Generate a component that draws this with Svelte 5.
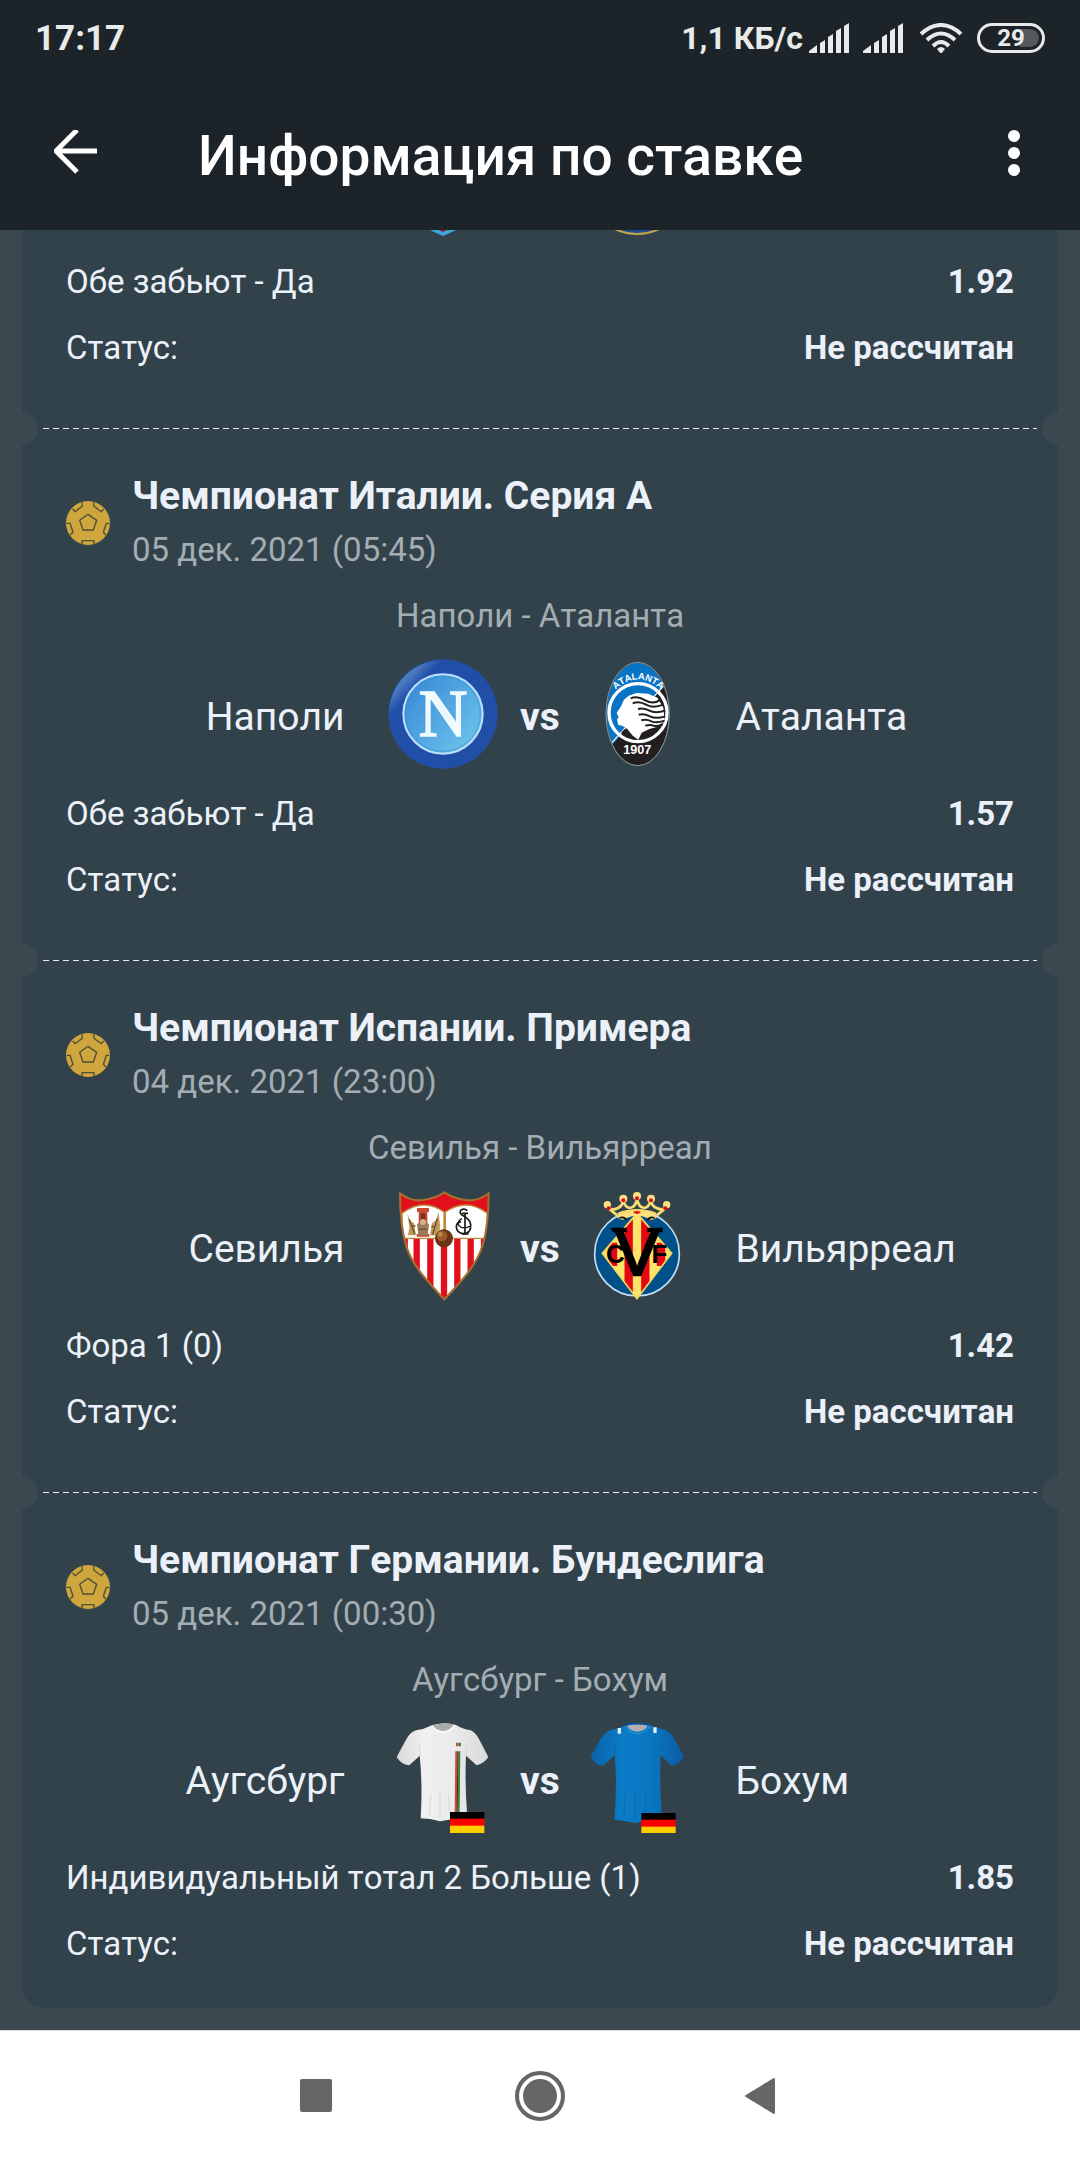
<script>
    let bets = [
        {
            crests: ["arsenal", "boca"],
            market: "Обе забьют - Да",
            odds: "1.92",
            status: "Не рассчитан",
        },
        {
            league: "Чемпионат Италии. Серия А",
            date: "05 дек. 2021 (05:45)",
            home: "Наполи",
            away: "Аталанта",
            crests: ["napoli", "atalanta"],
            market: "Обе забьют - Да",
            odds: "1.57",
            status: "Не рассчитан",
        },
        {
            league: "Чемпионат Испании. Примера",
            date: "04 дек. 2021 (23:00)",
            home: "Севилья",
            away: "Вильярреал",
            crests: ["sevilla", "villarreal"],
            market: "Фора 1 (0)",
            odds: "1.42",
            status: "Не рассчитан",
        },
        {
            league: "Чемпионат Германии. Бундеслига",
            date: "05 дек. 2021 (00:30)",
            home: "Аугсбург",
            away: "Бохум",
            crests: ["augsburg", "bochum"],
            market: "Индивидуальный тотал 2 Больше (1)",
            odds: "1.85",
            status: "Не рассчитан",
        },
    ];
</script>

{#snippet signal()}
    <svg class="signal" viewBox="0 0 40 30" aria-hidden="true">
        <path d="M0 30v-2l8-6v8zM11 30V20l5-3v13zM19 30V14l5-3v19zM27 30V8l5-3v25zM35 30V3l5-3v30z" />
    </svg>
{/snippet}

{#snippet germany(x, y)}
    <rect {x} {y} width="103" height="21" fill="#000" />
    <rect {x} y={y + 20} width="103" height="22" fill="#f00" />
    <rect {x} y={y + 41} width="103" height="22" fill="#ffce00" />
{/snippet}

{#snippet crest(name)}
    {#if name === "arsenal"}
        <svg class="crest" viewBox="0 0 110 110" aria-hidden="true">
            <path d="M15 10h80v58q0 25-40 41Q15 93 15 68z" fill="#3fa3d8" />
            <path d="M20 15h70v52q0 22-35 38Q20 89 20 67z" fill="#7c2740" />
        </svg>
    {:else if name === "boca"}
        <svg class="crest" viewBox="0 0 110 110" aria-hidden="true">
            <circle cx="54" cy="57" r="50" fill="#1c4a94" stroke="#c0a54a" stroke-width="2" />
        </svg>
    {:else if name === "napoli"}
        <svg class="crest" viewBox="54 54 330 330" aria-hidden="true">
            <defs>
                <linearGradient id="shine" x1="0.1" y1="0.15" x2="0.4" y2="0.4">
                    <stop offset="0" stop-color="#5d8fce" />
                    <stop offset="0.5" stop-color="#4b79c0" />
                    <stop offset="1" stop-color="#214fa8" />
                </linearGradient>
                <linearGradient id="sky" x1="0.1" y1="0.2" x2="0.9" y2="0.9">
                    <stop offset="0" stop-color="#3c8fd9" />
                    <stop offset="1" stop-color="#6cc3ea" />
                </linearGradient>
                <linearGradient id="letter" x1="0" y1="0" x2="1" y2="1">
                    <stop offset="0" stop-color="#fff" />
                    <stop offset="0.5" stop-color="#e6f6fc" />
                    <stop offset="1" stop-color="#fff" />
                </linearGradient>
            </defs>
            <circle cx="219" cy="219" r="164" fill="#214fa8" />
            <path d="M219 58A161 161 0 0 0 60 250Q150 120 275 68Q245 58 219 58z" fill="url(#shine)" />
            <circle cx="219" cy="219" r="119" fill="url(#sky)" stroke="#bfe0fa" stroke-width="6" />
            <circle cx="219" cy="219" r="112" fill="none" stroke="#3d8fcf" stroke-width="2" />
            <text class="serif" x="219" y="285" font-size="202" fill="url(#letter)" stroke="#f2fbff" stroke-width="5" text-anchor="middle">N</text>
        </svg>
    {:else if name === "atalanta"}
        <svg class="crest" viewBox="639 54 330 330" aria-hidden="true">
            <defs>
                <clipPath id="oval"><ellipse cx="803" cy="219" rx="93" ry="153" /></clipPath>
                <clipPath id="disc"><circle cx="804" cy="215" r="86" /></clipPath>
                <path id="arc" d="M732 150Q804 80 878 150" />
            </defs>
            <g clip-path="url(#oval)">
                <path d="M700 50h220v50L690 352z" fill="#0a74c4" />
                <path d="M920 92v300H700v-50z" fill="#231f20" />
                <path d="M888 127L722 309" stroke="#dfe9f0" stroke-width="4" />
            </g>
            <ellipse cx="803" cy="219" rx="95" ry="155" fill="none" stroke="#8f989d" stroke-width="3" />
            <text class="sans" font-size="28" font-weight="700" fill="#fff" text-anchor="middle"><textPath href="#arc" startOffset="50%">ATALANTA</textPath></text>
            <circle cx="804" cy="215" r="87" fill="none" stroke="#fff" stroke-width="10" />
            <path d="M776 164L800 156L835 158L862 170L880 200L884 240L860 258L838 264L815 275L805 296L788 284L770 262L756 254L745 252L741 236L746 228L740 216L753 196L762 176z" fill="#fff" />
            <g clip-path="url(#disc)" fill="none" stroke="#231f20" stroke-width="6">
                <path d="M782 172q20-8 44 6t46-2" />
                <path d="M788 187q20-8 40 4t52 0" />
                <path d="M804 204q16-4 34 5t48 0" />
                <path d="M806 221q16-4 34 5t46 0" />
                <path d="M814 238q16-4 30 3t40-2" />
                <path d="M826 254q14-4 24 0t28-4" />
            </g>
            <path d="M765 264L788 285L800 297Q776 296 754 274z" fill="#231f20" />
            <text class="sans" x="802" y="339" font-size="38" font-weight="700" fill="#fff" text-anchor="middle">1907</text>
        </svg>
    {:else if name === "sevilla"}
        <svg class="crest" viewBox="54 45 330 330" aria-hidden="true">
            <defs>
                <clipPath id="shield">
                    <path d="M90 52Q122 78 160 72Q200 66 223 49Q246 66 286 72Q324 78 356 52C356 110 352 160 338 208C318 272 270 320 223 370C176 320 128 272 108 208C94 160 90 110 90 52z" />
                </clipPath>
            </defs>
            <g clip-path="url(#shield)">
                <path d="M80 40h290v340H80z" fill="#e2101c" />
                <path d="M80 187h290v193H80z" fill="#fff" />
                <path
                    d="M140 187V380M181 187V380M222 187V380M262 187V380M302 187V380M104 187V380M342 187V380"
                    stroke="#e2101c"
                    stroke-width="19"
                />
                <path d="M96 112Q160 64 222 108V187H96zM226 108Q290 64 352 112V187H226z" fill="#fff" stroke="#c08a3c" stroke-width="4" />
                <path d="M141 96h36v12h-5v66h6v8h-38v-8h6v-66h-5z" fill="#c84a35" />
                <path d="M152 112h14v26h-14z" fill="#7a3026" />
                <path d="M141 146q18-26 36 0l-4 32h-28z" fill="#9a7a5a" />
                <circle cx="159" cy="138" r="9" fill="#d8b088" />
                <path d="M112 112l8 22 12 8 6 36h-24l4-24zM206 108l-8 24-12 10-6 36h28l2-30z" fill="#c09a58" />
                <path d="M118 130l16 44M202 128l-14 48M128 150h8M184 152h8M147 160h24" stroke="#6b4a2a" stroke-width="4" fill="none" />
            </g>
            <!-- interlaced club monogram -->
            <g fill="none" stroke="#1a1a1a" stroke-width="5">
                <path d="M292 104q-8-8-18-3q-8 8 2 16q24 12 26 28q2 28-22 28q-20-2-21-20q0-14 14-16" />
                <path d="M285 112V174M276 174h20M276 112h18" />
                <path d="M276 128q-14 6-10 20q12 14 36 2" stroke-width="4" />
            </g>
            <path d="M90 52Q122 78 160 72Q200 66 223 49Q246 66 286 72Q324 78 356 52C356 110 352 160 338 208C318 272 270 320 223 370C176 320 128 272 108 208C94 160 90 110 90 52z" fill="none" stroke="#a8702f" stroke-width="6" />
            <circle cx="222" cy="187" r="27" fill="#6b3517" />
            <circle cx="216" cy="180" r="16" fill="#9a5c2a" />
            <circle cx="211" cy="175" r="7" fill="#c08a4c" />
        </svg>
    {:else if name === "villarreal"}
        <svg class="crest" viewBox="639 45 330 330" aria-hidden="true">
            <defs>
                <clipPath id="rhomb"><path d="M801 112L905 232L801 368L697 232z" /></clipPath>
            </defs>
            <circle cx="801" cy="233" r="127" fill="#00508a" stroke="#c3ddf2" stroke-width="5" />
            <g clip-path="url(#rhomb)">
                <path d="M690 100h220v280H690z" fill="#fde46a" />
                <path d="M776 100V380M826 100V380M729 200V270M873 200V270" stroke="#e30613" stroke-width="25" />
            </g>
            <path d="M801 112L905 232L801 368L697 232z" fill="none" stroke="#f3d95c" stroke-width="5" />
            <g class="sans" fill="#000" text-anchor="middle">
                <text x="801" y="298" font-size="190" stroke="#000" stroke-width="8">V</text>
                <text x="736" y="262" font-size="78" font-weight="700">C</text>
                <text x="868" y="262" font-size="78" font-weight="700">F</text>
            </g>
            <path d="M722 155h48v14h-42zM832 155h46v14h-46z" fill="#000" />
            <path d="M740 122Q801 84 862 122Q846 138 832 126Q801 112 770 126Q756 138 740 122z" fill="#fde27a" />
            <path d="M748 126q16-6 22 8M854 126q-16-6-22 8" fill="none" stroke="#111" stroke-width="5" />
            <g fill="none" stroke="#f7dc72" stroke-width="8">
                <path d="M742 118L714 96Q730 104 744 96Q758 90 760 72Q764 94 780 96Q798 94 801 66Q804 94 822 96Q838 94 842 72Q846 92 860 96Q874 104 888 96L860 118" />
                <path d="M744 114Q801 92 858 114" />
            </g>
            <g fill="#fbe184">
                <circle cx="801" cy="60" r="12" />
                <circle cx="760" cy="68" r="12" />
                <circle cx="843" cy="68" r="12" />
                <circle cx="712" cy="86" r="11" />
                <circle cx="890" cy="86" r="11" />
            </g>
            <g fill="#e30613">
                <circle cx="801" cy="67" r="6" />
                <circle cx="760" cy="73" r="6" />
                <circle cx="843" cy="73" r="6" />
                <circle cx="716" cy="97" r="6" />
                <circle cx="886" cy="97" r="6" />
                <path d="M791 109h20M801 104v10" stroke="#e30613" stroke-width="5" />
            </g>
        </svg>
    {:else if name === "augsburg"}
        <svg class="crest" viewBox="54 66 330 330" aria-hidden="true">
            <defs>
                <linearGradient id="white">
                    <stop offset="0" stop-color="#d8d8d8" />
                    <stop offset="0.3" stop-color="#f0f0f0" />
                    <stop offset="0.6" stop-color="#ebebeb" />
                    <stop offset="1" stop-color="#dadada" />
                </linearGradient>
            </defs>
            <path d="M182 74Q220 60 258 72Q276 84 302 88Q318 96 328 116L355 168Q344 186 320 193L288 164Q284 250 292 350Q250 352 210 361Q180 352 152 352Q158 250 149 164L118 193Q92 190 80 168L108 116Q120 94 138 88Q164 84 182 74z" fill="url(#white)" />
            <path d="M188 72Q220 64 252 70Q242 88 220 90Q196 88 188 72z" fill="#aaa" />
            <path d="M186 74Q196 94 220 94Q246 92 254 72" fill="none" stroke="#f8f8f8" stroke-width="5" />
            <path d="M147 128q4 20 2 36M290 128q-4 20-2 36M210 270v80M182 280l-4 60M236 280l2 60" fill="none" stroke="#dcdcdc" stroke-width="4" />
            <path d="M258 125h8v11h-8zM256 151h6l-1 182h-7z" fill="#cc4a3f" />
            <path d="M266 125h7v11h-7zM266 151h5l-2 182h-6z" fill="#2f8a3c" />
            <path d="M262 151h4l-3 182h-3z" fill="#4a2a20" />
            {@render germany(240, 333)}
        </svg>
    {:else}
        <svg class="crest" viewBox="639 66 330 330" aria-hidden="true">
            <defs>
                <linearGradient id="blue">
                    <stop offset="0" stop-color="#0a62a8" />
                    <stop offset="0.35" stop-color="#0b7cc8" />
                    <stop offset="0.65" stop-color="#0a76c0" />
                    <stop offset="1" stop-color="#0a5ca4" />
                </linearGradient>
            </defs>
            <path d="M764 74Q802 62 840 72Q858 82 886 86Q904 96 914 116L942 168Q930 188 906 195L872 162Q868 250 876 352Q840 356 796 366Q764 358 733 356Q742 250 734 162L698 195Q672 190 662 168L690 116Q704 94 722 86Q748 82 764 74z" fill="url(#blue)" />
            <path d="M770 73Q802 68 834 73Q826 90 802 92Q778 90 770 73z" fill="#b3aeb0" />
            <path d="M768 71Q802 62 836 71" fill="none" stroke="#0b4da0" stroke-width="6" />
            <path d="M767 76Q778 96 802 98Q828 96 839 76" fill="none" stroke="#2f9ade" stroke-width="3" />
            <path d="M743 81h10v17h-10zM850 79h10v17h-10z" fill="#e3eef6" />
            <path d="M731 124q6 20 3 38M875 124q-6 20-3 38M796 270v86M766 280l-4 64M826 280l2 60" fill="none" stroke="#0a6cb6" stroke-width="4" />
            {@render germany(814, 336)}
        </svg>
    {/if}
{/snippet}

<div class="screen">
    <header>
        <div class="statusbar">
            <span class="clock">17:17</span>
            <span>1,1 КБ/с</span>
            {@render signal()}
            {@render signal()}
            <svg class="wifi" viewBox="0 0 44 30" aria-hidden="true">
                <g fill="none" stroke="#e9ebeb" stroke-width="4">
                    <path d="M2 11Q22-7 42 11" />
                    <path d="M8 17Q22 4 36 17" />
                    <path d="M14 23Q22 15 30 23" />
                </g>
                <path d="M18 26q4-4 8 0l-4 5z" />
            </svg>
            <span class="battery">29</span>
        </div>
        <div class="toolbar">
            <button aria-label="Назад">
                <svg width="44" height="46" viewBox="0 0 44 46" aria-hidden="true">
                    <path d="M43 21H3M23 0L2 21l21 21" fill="none" stroke="#fff" stroke-width="5" />
                </svg>
            </button>
            <h1>Информация по ставке</h1>
            <button aria-label="Меню">
                <svg width="12" height="46" viewBox="0 0 12 46" aria-hidden="true">
                    <circle cx="6" cy="6" r="6" fill="#fff" />
                    <circle cx="6" cy="23" r="6" fill="#fff" />
                    <circle cx="6" cy="40" r="6" fill="#fff" />
                </svg>
            </button>
        </div>
    </header>

    <main>
        <div class="coupon">
            {#each bets as bet}
                <article>
                    {#if bet.league}
                        <div class="league">
                            <svg class="ball" viewBox="18 18 132 132" aria-hidden="true">
                                <circle cx="84" cy="84" r="66" fill="#cfa63d" />
                                <g fill="none" stroke="#4d4f35" stroke-width="4" stroke-linejoin="round">
                                    <path d="M84 58L110 76L100 105H69L59 76z" />
                                    <path d="M38 42L45 50L67 34L66 22" />
                                    <path d="M101 22L102 34L124 50L131 42" />
                                    <path d="M20 85H30L39 112L30 120" />
                                    <path d="M148 85H139L130 112L138 120" />
                                    <path d="M66 147V137H102V147" />
                                </g>
                            </svg>
                            <div>
                                <h2>{bet.league}</h2>
                                <p class="muted">{bet.date}</p>
                            </div>
                        </div>
                        <p class="match muted">{bet.home} - {bet.away}</p>
                    {/if}
                    <div class="teams">
                        <span class="home">{bet.home}</span>
                        {@render crest(bet.crests[0])}
                        <strong>{bet.league ? "vs" : ""}</strong>
                        {@render crest(bet.crests[1])}
                        <span>{bet.away}</span>
                    </div>
                    <dl>
                        <div>
                            <dt>{bet.market}</dt>
                            <dd>{bet.odds}</dd>
                        </div>
                        <div>
                            <dt>Статус:</dt>
                            <dd>{bet.status}</dd>
                        </div>
                    </dl>
                </article>
            {/each}
        </div>
    </main>

    <nav>
        <button aria-label="Недавние">
            <svg width="50" height="50" viewBox="0 0 50 50" aria-hidden="true">
                <rect x="7" y="8" width="32" height="33" rx="2" />
            </svg>
        </button>
        <button aria-label="Домой">
            <svg width="50" height="50" viewBox="0 0 50 50" aria-hidden="true">
                <circle cx="25" cy="25" r="17" />
                <circle cx="25" cy="25" r="23" fill="none" stroke="#666" stroke-width="4" />
            </svg>
        </button>
        <button aria-label="Назад">
            <svg width="50" height="50" viewBox="0 0 50 50" aria-hidden="true">
                <path d="M9 25L37 8V42z" stroke="#666" stroke-width="2" stroke-linejoin="round" />
            </svg>
        </button>
    </nav>
</div>

<style>
    :global(body) {
        margin: 0;
        background: #3a4950;
    }

    * {
        box-sizing: border-box;
    }

    .screen {
        height: 100vh;
        display: flex;
        flex-direction: column;
        font-family: Roboto, "Noto Sans", sans-serif;
        font-size: 33px;
        font-kerning: none;
        color: #ecf1f9;
    }

    header {
        background: #1d2429;
    }

    .statusbar {
        display: flex;
        align-items: center;
        height: 76px;
        padding: 0 35px;
        font-size: 32px;
        font-weight: 700;
        color: #e9ebeb;
        fill: #e9ebeb;
    }

    .clock {
        flex: 1;
        font-size: 35px;
    }

    .signal {
        width: 40px;
        height: 30px;
        margin: 0 8px 0 6px;
    }

    .wifi {
        width: 44px;
        height: 30px;
        margin: 0 14px 0 8px;
    }

    .battery {
        width: 68px;
        height: 30px;
        border: 3px solid #e9ebeb;
        border-radius: 15px;
        padding: 3px;
        background: linear-gradient(to right, transparent 66%, #56595c 66%) content-box;
        font-size: 24px;
        line-height: 18px;
        text-align: center;
    }

    .toolbar {
        display: flex;
        align-items: center;
        height: 154px;
        padding: 0 60px 0 54px;
    }

    h1 {
        flex: 1;
        margin: 6px 0 0;
        padding-left: 100px;
        font-size: 55px;
        font-weight: 500;
        color: #fff;
    }

    button {
        display: flex;
        align-items: center;
        justify-content: center;
        border: 0;
        padding: 0;
        background: none;
    }

    main {
        flex: 1;
        min-height: 0;
        display: flex;
        flex-direction: column;
        justify-content: flex-end;
        overflow: hidden;
        padding: 0 22px 22px;
    }

    .coupon {
        overflow: hidden;
        flex: none;
        padding-bottom: 31px;
        border-radius: 22px;
        background: #32424a;
    }

    article {
        position: relative;
        padding: 40px 44px 0;
    }

    article:not(:last-child) {
        padding-bottom: 48px;
        background: repeating-linear-gradient(to right, #e3eaf0 0 6px, transparent 6px 10px) 21px 100% / calc(100% - 42px) 1px no-repeat;
    }

    /* ticket notches at both ends of the tear line */
    article:not(:last-child)::before,
    article:not(:last-child)::after {
        content: "";
        position: absolute;
        bottom: -16px;
        width: 33px;
        height: 33px;
        border-radius: 50%;
        background: #3a4950;
    }

    article::before {
        left: -17px;
    }

    article::after {
        right: -17px;
    }

    .league {
        display: flex;
        align-items: center;
        gap: 22px;
    }

    .ball {
        width: 44px;
        height: 44px;
    }

    h2,
    p,
    dl,
    dd {
        margin: 0;
    }

    h2 {
        font-size: 39px;
        line-height: 54px;
    }

    .muted {
        line-height: 54px;
        color: #a3adb3;
    }

    .match {
        margin: 12px 0 16px;
        text-align: center;
    }

    .teams {
        display: grid;
        grid-template-columns: 1fr 110px 85px 110px 1fr;
        align-items: center;
        font-size: 39px;
        line-height: 46px;
    }

    .teams span {
        padding: 6px 43px 0;
    }

    .home {
        text-align: right;
    }

    strong {
        padding-top: 6px;
        text-align: center;
    }

    .crest {
        display: block;
        width: 110px;
        height: 110px;
    }

    .serif {
        font-family: "Liberation Serif", serif;
    }

    .sans {
        font-family: "Liberation Sans", sans-serif;
    }

    dl {
        padding-top: 12px;
    }

    dl div {
        display: flex;
        justify-content: space-between;
        line-height: 66px;
    }

    dd {
        font-weight: 700;
    }

    nav {
        display: flex;
        justify-content: center;
        height: 130px;
        border-top: 1px solid #dcdde1;
        background: #fff;
        fill: #666;
    }

    nav button {
        width: 222px;
    }
</style>
